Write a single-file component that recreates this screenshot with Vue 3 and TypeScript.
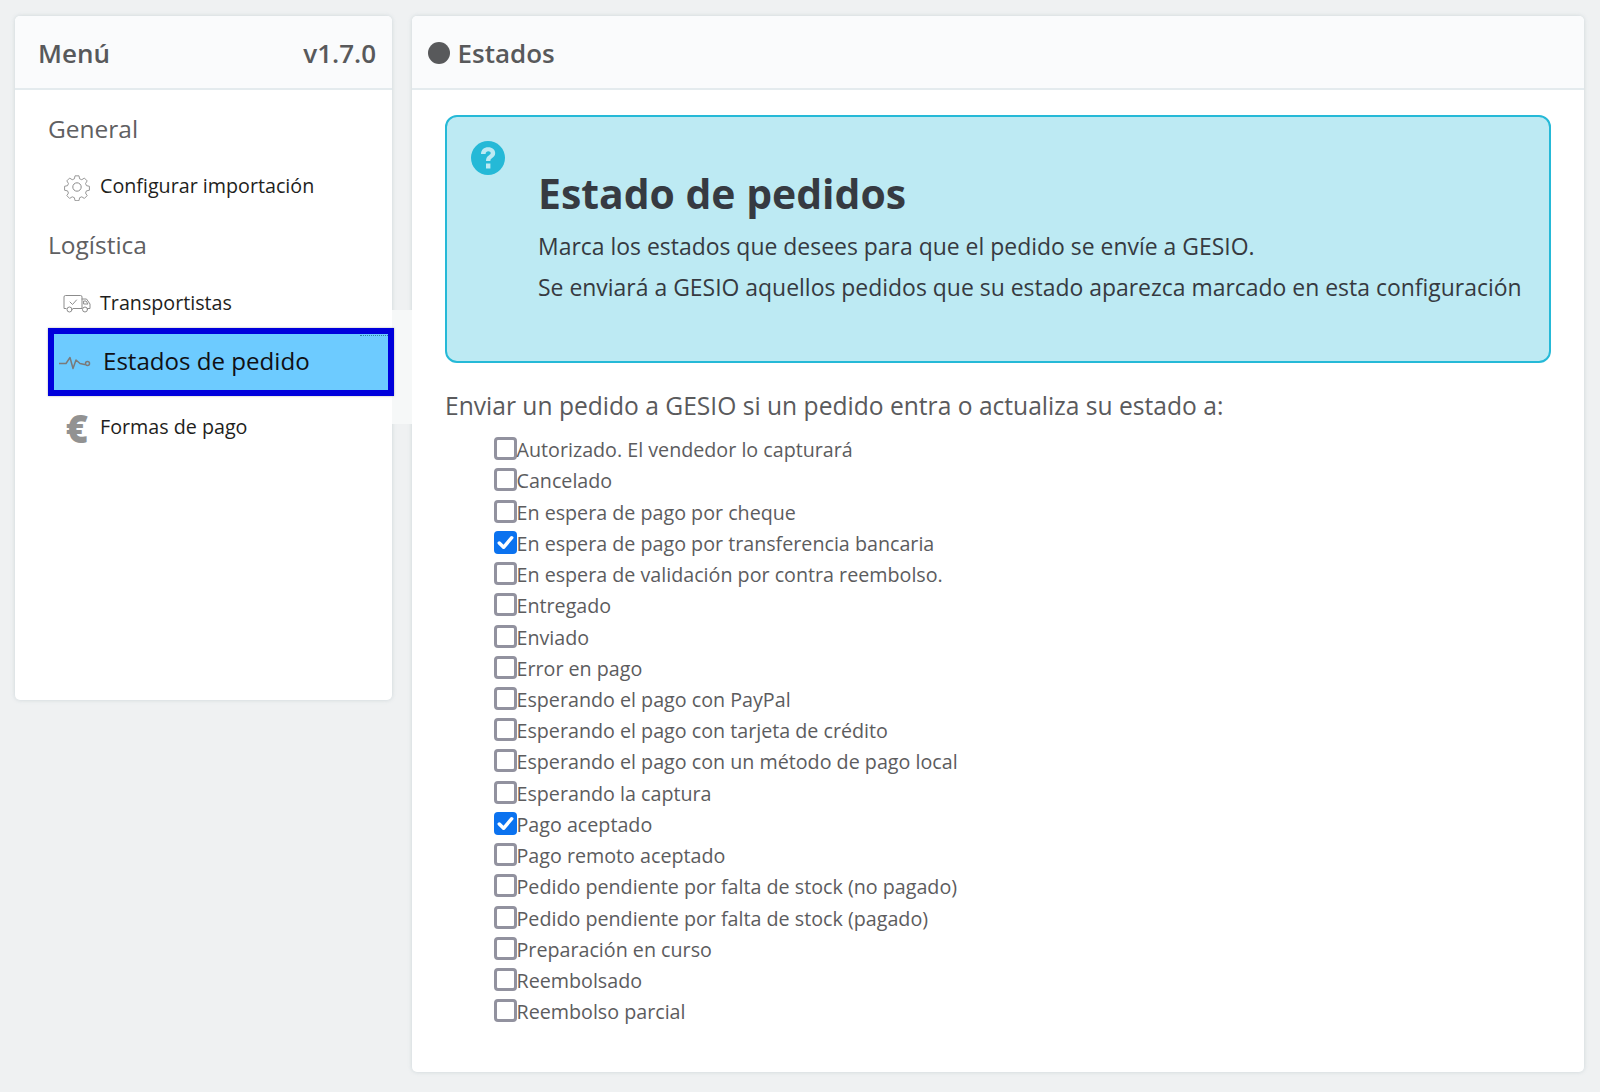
<script setup lang="ts">
const states: { label: string; checked: boolean }[] = [
  { label: 'Autorizado. El vendedor lo capturará', checked: false },
  { label: 'Cancelado', checked: false },
  { label: 'En espera de pago por cheque', checked: false },
  { label: 'En espera de pago por transferencia bancaria', checked: true },
  { label: 'En espera de validación por contra reembolso.', checked: false },
  { label: 'Entregado', checked: false },
  { label: 'Enviado', checked: false },
  { label: 'Error en pago', checked: false },
  { label: 'Esperando el pago con PayPal', checked: false },
  { label: 'Esperando el pago con tarjeta de crédito', checked: false },
  { label: 'Esperando el pago con un método de pago local', checked: false },
  { label: 'Esperando la captura', checked: false },
  { label: 'Pago aceptado', checked: true },
  { label: 'Pago remoto aceptado', checked: false },
  { label: 'Pedido pendiente por falta de stock (no pagado)', checked: false },
  { label: 'Pedido pendiente por falta de stock (pagado)', checked: false },
  { label: 'Preparación en curso', checked: false },
  { label: 'Reembolsado', checked: false },
  { label: 'Reembolso parcial', checked: false },
]
</script>

<template>
  <div class="page">
    <aside class="panel menu">
      <header class="panel-head">
        <span>Menú</span>
        <span>v1.7.0</span>
      </header>
      <nav class="nav">
        <h3 class="group first">General</h3>
        <a class="item item-config">
          <svg class="icon" viewBox="0 0 28 28" fill="none" stroke="#8c8c8c" stroke-width="1" stroke-linejoin="round">
            <circle cx="14" cy="14" r="4.2" />
            <path d="M11.8 1.6h4.4l.7 3.3 2.4 1 2.9-1.8 3.1 3.1-1.8 2.9 1 2.4 3.3.7v4.4l-3.3.7-1 2.4 1.8 2.9-3.1 3.1-2.9-1.8-2.4 1-.7 3.3h-4.4l-.7-3.3-2.4-1-2.9 1.8-3.1-3.1 1.8-2.9-1-2.4-3.3-.7v-4.4l3.3-.7 1-2.4-1.8-2.9 3.1-3.1 2.9 1.8 2.4-1z" transform="translate(1.4 1.4) scale(.9)" />
          </svg>
          <span>Configurar importación</span>
        </a>
        <h3 class="group second">Logística</h3>
        <a class="item item-carrier">
          <svg class="icon" viewBox="0 0 28 20" fill="none" stroke="#8c8c8c" stroke-width="1" stroke-linejoin="round" stroke-linecap="round">
            <path d="M3 14.500H1V3a1.500 1.500 0 0 1 1.500-1.500h15a1.500 1.500 0 0 1 1.500 1.500v11.500H10" />
            <path d="M19 5h4.500l3.500 5v4.500h-2.500" />
            <path d="M21 7h2l2 3h-4z" />
            <circle cx="6.500" cy="15.500" r="2.500" />
            <circle cx="22" cy="15.500" r="2.500" />
            <path d="M7 8l2.500 2.500 4-4.500" />
          </svg>
          <span>Transportistas</span>
        </a>
        <a class="item active">
          <svg class="pulse" viewBox="0 0 32 14" fill="none" stroke="#7a7a7a" stroke-width="1.500" stroke-linejoin="round" stroke-linecap="round">
            <path d="M0 7.500h7l4-6 3 11 3-8.500 4 3.500 4.500 1" />
            <circle cx="28.500" cy="7.500" r="2" />
          </svg>
          <span>Estados de pedido</span>
          <i class="dots"></i>
        </a>
        <a class="item item-pay">
          <span class="euro">€</span>
          <span>Formas de pago</span>
        </a>
      </nav>
    </aside>
    <i class="gutter"></i>
    <main class="panel content">
      <header class="panel-head start">
        <i class="dot"></i>
        <span>Estados</span>
      </header>
      <div class="body">
        <section class="alert">
          <svg class="help" viewBox="0 0 34 34">
            <circle cx="17" cy="17" r="17" fill="#25b9d7" />
            <path d="M10 13c0-4.200 3-6.800 7.200-6.800 4.200 0 7 2.400 7 5.900 0 2.500-1.300 3.800-3 5-1.400 1-1.800 1.500-1.800 3h-4.400c0-3 .8-4.200 2.800-5.600 1.200-.9 1.900-1.400 1.900-2.400 0-1.100-1-1.800-2.400-1.800-1.500 0-2.600 1-2.700 2.800z" fill="#bdeaf3" />
            <rect x="15" y="22.500" width="4.400" height="5" fill="#bdeaf3" />
          </svg>
          <h1>Estado de pedidos</h1>
          <p>Marca los estados que desees para que el pedido se envíe a GESIO.</p>
          <p>Se enviará a GESIO aquellos pedidos que su estado aparezca marcado en esta configuración</p>
        </section>
        <h2 class="question">Enviar un pedido a GESIO si un pedido entra o actualiza su estado a:</h2>
        <ul class="list">
          <li v-for="s in states" :key="s.label" class="row">
            <span class="box" :class="{ on: s.checked }">
              <svg v-if="s.checked" viewBox="0 0 24 24" fill="none" stroke="#fff" stroke-width="3.600" stroke-linecap="round" stroke-linejoin="round">
                <path d="M5.500 12.500l4.500 4.500 8.500-10" />
              </svg>
            </span>
            <span>{{ s.label }}</span>
          </li>
        </ul>
      </div>
    </main>
  </div>
</template>

<style>
html, body { margin: 0; background: #eff1f2; }
</style>

<style scoped>
.page {
  position: relative;
  box-sizing: border-box;
  height: 1092px;
  padding: 16px 16px 21px 15px;
  display: grid;
  grid-template-columns: 377px 1172px;
  column-gap: 20px;
  align-items: start;
  font-family: "Open Sans", sans-serif;
  color: #5a5a5c;
  background: #eff1f2;
  overflow: hidden;
}
.panel {
  background: #fff;
  border-radius: 5px;
  box-shadow: 0 0 4px rgba(120, 145, 155, .28);
}
.menu { height: 684px; }
.content { height: 1056px; }
.panel-head {
  box-sizing: border-box;
  height: 74px;
  padding: 2px 16px 0 23px;
  display: flex;
  align-items: center;
  justify-content: space-between;
  background: #fafbfc;
  border-bottom: 2px solid #e4ebee;
  border-radius: 5px 5px 0 0;
  font-size: 26px;
  font-weight: 600;
  color: #58595b;
}
.panel-head.start { justify-content: flex-start; gap: 7.500px; padding-left: 16px; }
.dot { width: 22px; height: 22px; border-radius: 50%; background: #58595b; }
.nav { display: flex; flex-direction: column; }
.group {
  margin: 0 0 0 33px;
  font-size: 24.500px;
  line-height: 36px;
  font-weight: 400;
  color: #5f6062;
}
.group.first { margin-top: 21px; }
.group.second { margin-top: 22px; }
.item {
  height: 40px;
  display: flex;
  align-items: center;
  padding-left: 48px;
  gap: 9px;
  font-size: 19.700px;
  color: #1e1e20;
}
.icon { width: 28px; height: 28px; flex: none; margin-top: 3px; }
.item-config { margin-top: 18px; }
.item-carrier { margin-top: 19px; }
.item-pay { margin-top: 10px; }
.euro {
  width: 28px;
  flex: none;
  padding-top: 3px;
  text-align: center;
  font-size: 38px;
  line-height: 40px;
  font-weight: 800;
  color: #929292;
}
.active {
  position: relative;
  z-index: 2;
  box-sizing: border-box;
  width: 346px;
  height: 68px;
  margin: 6px 0 0 33px;
  padding: 0 0 4px 5px;
  gap: 12px;
  background: #6dcbff;
  border: 6px solid #0000dc;
  font-size: 24.100px;
  color: #101014;
  box-shadow: 0 0 2px rgba(0, 0, 0, .3);
}
.pulse { width: 32px; height: 14px; flex: none; margin-top: 6px; }
.dots {
  position: absolute;
  top: 1px;
  right: 0;
  width: 28px;
  border-top: 1px dotted #2f7f9a;
}
.gutter {
  position: absolute;
  left: 392px;
  top: 310px;
  width: 20px;
  height: 114px;
  background: #f6f8f8;
}
.body { padding: 25px 33px 0 33px; }
.alert {
  position: relative;
  box-sizing: border-box;
  height: 248px;
  padding: 50.500px 20px 0 91px;
  background: #bdeaf3;
  border: 2px solid #25b9d7;
  border-radius: 12px;
  color: #363a41;
}
.help {
  position: absolute;
  left: 24px;
  top: 24px;
  width: 34px;
  height: 34px;
}
.alert h1 {
  margin: 0 0 8px;
  font-size: 40.900px;
  line-height: 50px;
  font-weight: 700;
}
.alert p {
  margin: 0;
  font-size: 22.950px;
  line-height: 41px;
  white-space: nowrap;
}
.question {
  margin: 26px 0 0;
  font-size: 24.600px;
  line-height: 34px;
  font-weight: 400;
  color: #5a5a5c;
  white-space: nowrap;
}
.list {
  list-style: none;
  margin: 11px 0 0 49px;
  padding: 0;
}
.row {
  height: 31.240px;
  display: flex;
  align-items: center;
  font-size: 19.700px;
  color: #5c5c5e;
  white-space: nowrap;
}
.box {
  box-sizing: border-box;
  flex: none;
  width: 23px;
  height: 23px;
  margin: -2px -.5px 0 0;
  border: 3.500px solid #92929f;
  border-radius: 4px;
  background: #fff;
}
.box.on {
  border: 0;
  background: #0b72ef;
}
.box svg { display: block; width: 23px; height: 23px; }
</style>
